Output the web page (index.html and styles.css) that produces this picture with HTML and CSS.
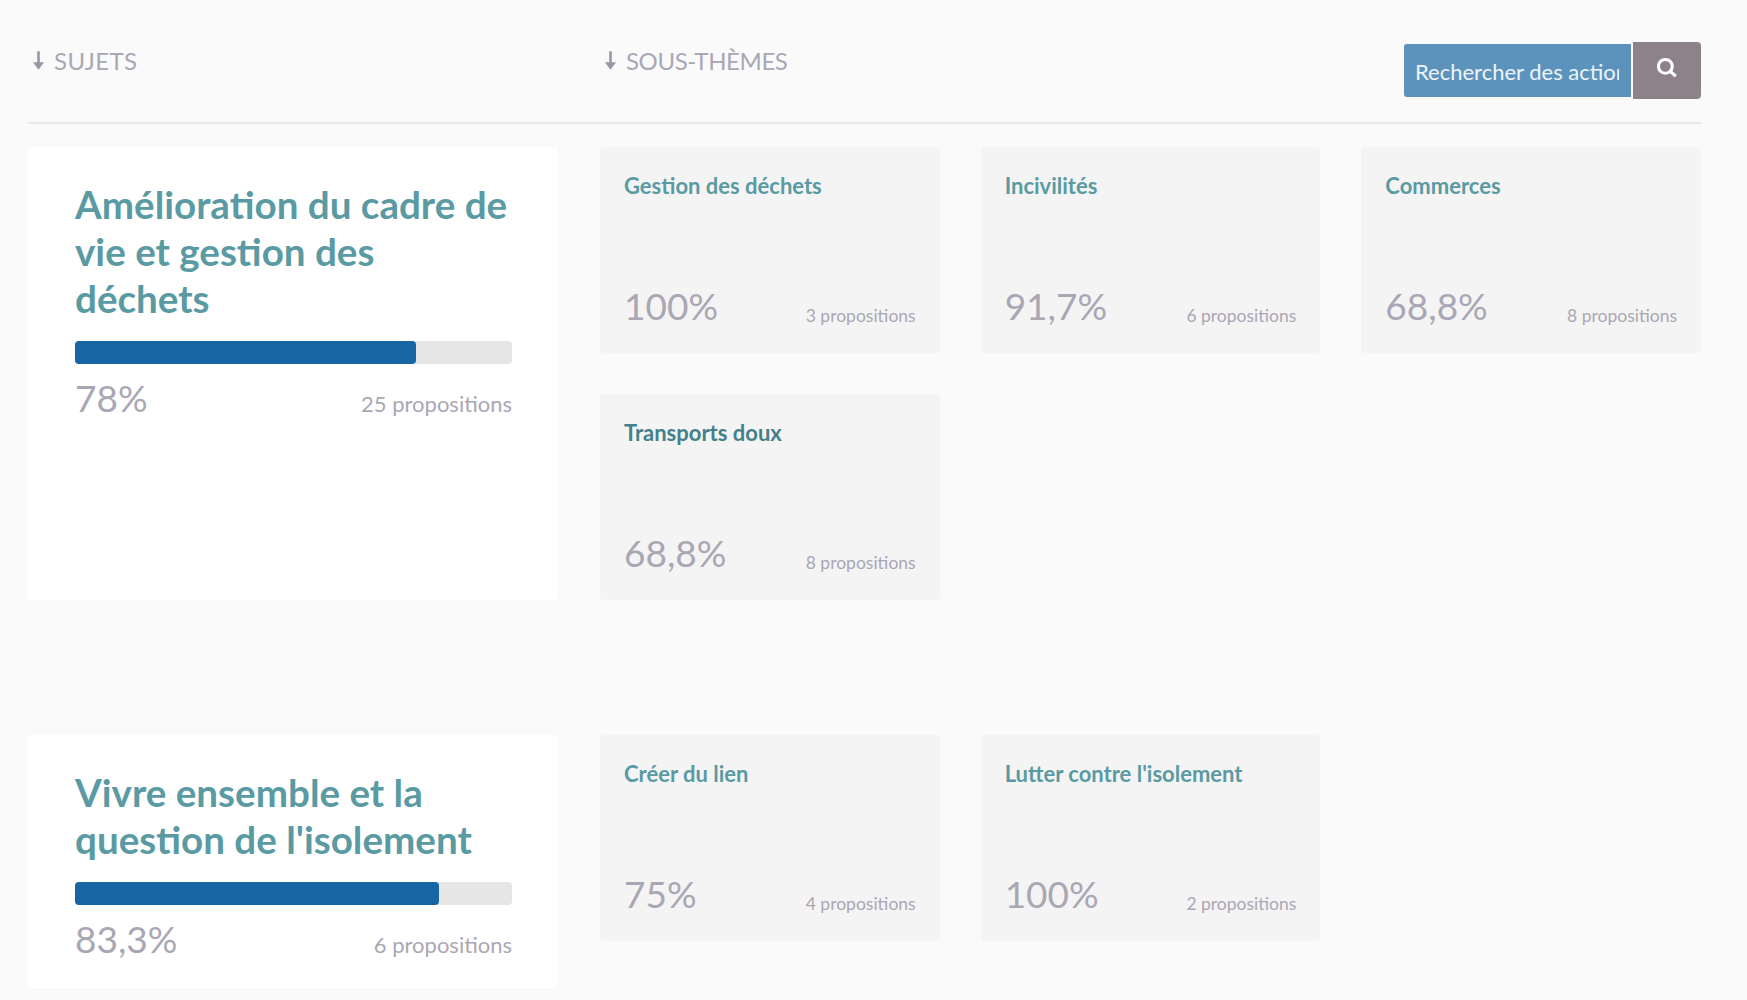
FILE: index.html
```html
<!DOCTYPE html>
<html lang="fr">
<head>
  <meta charset="UTF-8">
  <meta name="viewport" content="width=device-width, initial-scale=1.0">
  <title>Sujets et sous-thèmes</title>
  <link rel="stylesheet" href="styles.css">
</head>
<body>
  <header class="top-bar">
    <div class="col-label col-label-main">
      <svg class="arrow" viewBox="0 0 14 20"><path d="M5.6 0h2.8v12H13L7 20 1 12h4.6z" /></svg>
      SUJETS
    </div>
    <div class="col-label col-label-sub">
      <svg class="arrow" viewBox="0 0 14 20"><path d="M5.6 0h2.8v12H13L7 20 1 12h4.6z" /></svg>
      SOUS-THÈMES
    </div>
    <form class="search">
      <input class="search-input" type="text" placeholder="Rechercher des actions">
      <button class="search-button" type="button" aria-label="Rechercher">
        <svg viewBox="0 0 20 20" width="22" height="22"><circle cx="8.5" cy="8.5" r="6.3" /><path d="M13 13l5 4.5" /></svg>
      </button>
    </form>
  </header>

  <section class="topic">
    <div class="topic-card">
      <h2>Amélioration du cadre de vie et gestion des déchets</h2>
      <div class="bar"><div class="bar-fill" style="width: 78%"></div></div>
      <div class="stats">
        <span class="percent">78%</span>
        <span class="count">25 propositions</span>
      </div>
    </div>
    <div class="subtopics">
      <div class="sub-card">
        <h3>Gestion des déchets</h3>
        <div class="sub-stats"><span class="percent">100%</span><span class="count-small">3 propositions</span></div>
      </div>
      <div class="sub-card">
        <h3>Incivilités</h3>
        <div class="sub-stats"><span class="percent">91,7%</span><span class="count-small">6 propositions</span></div>
      </div>
      <div class="sub-card">
        <h3>Commerces</h3>
        <div class="sub-stats"><span class="percent">68,8%</span><span class="count-small">8 propositions</span></div>
      </div>
      <div class="sub-card">
        <h3 class="active">Transports doux</h3>
        <div class="sub-stats"><span class="percent">68,8%</span><span class="count-small">8 propositions</span></div>
      </div>
    </div>
  </section>

  <section class="topic">
    <div class="topic-card">
      <h2>Vivre ensemble et la question de l'isolement</h2>
      <div class="bar"><div class="bar-fill" style="width: 83.3%"></div></div>
      <div class="stats">
        <span class="percent">83,3%</span>
        <span class="count">6 propositions</span>
      </div>
    </div>
    <div class="subtopics">
      <div class="sub-card">
        <h3>Créer du lien</h3>
        <div class="sub-stats"><span class="percent">75%</span><span class="count-small">4 propositions</span></div>
      </div>
      <div class="sub-card">
        <h3>Lutter contre l'isolement</h3>
        <div class="sub-stats"><span class="percent">100%</span><span class="count-small">2 propositions</span></div>
      </div>
    </div>
  </section>
</body>
</html>
```

FILE: styles.css
```css
html, body {
  height: 100%;
  overflow: hidden;
}

body {
  margin: 0;
  padding: 0 46px 0 28px;
  background-color: #fafafa;
  color: #aaa7b5;
  font-family: Lato, "Open Sans", sans-serif;
}

.top-bar {
  display: grid;
  grid-template-columns: 572px 1fr auto;
  height: 122px;
  border-bottom: 2px solid #e9e9e9;
  margin-bottom: 23px;
}

.col-label {
  display: flex;
  align-items: center;
  gap: 9px;
  height: 24px;
  margin-top: 48px;
  font-size: 24px;
  color: #aaa7b5;
}

.col-label-main {
  padding-left: 1px;
  letter-spacing: 0.4px;
}

.col-label-sub {
  padding-left: 1px;
  letter-spacing: -0.4px;
}

.arrow {
  width: 13px;
  height: 19px;
  margin-left: 3px;
  fill: #9a97a5;
}

.search {
  display: flex;
  align-items: center;
  gap: 2px;
  height: 57px;
  margin-top: 42px;
}

.search-input {
  width: 227px;
  height: 53px;
  box-sizing: border-box;
  padding: 1px 12px 0 11px;
  border: none;
  border-radius: 3px 0 0 3px;
  background-color: #5c93bd;
  color: #fff;
  font-family: inherit;
  font-size: 22px;
}

.search-input::placeholder {
  color: #eef4f8;
  opacity: 1;
}

.search-button {
  display: flex;
  align-items: center;
  justify-content: center;
  width: 68px;
  height: 57px;
  padding: 0 0 5px;
  border: none;
  border-radius: 0 4px 4px 0;
  background-color: #8d8289;
}

.search-button svg {
  fill: none;
  stroke: #fff;
  stroke-width: 2.8;
}

.topic {
  display: grid;
  grid-template-columns: 530px 1fr;
  gap: 42px;
  margin-bottom: 135px;
}

.topic-card {
  box-sizing: border-box;
  padding: 34px 46px 26px 47px;
  border-radius: 3px;
  background-color: #fff;
}

.topic-card h2 {
  margin: 0 0 19px;
  font-size: 38.6px;
  font-weight: 700;
  line-height: 47px;
  color: #5a9aa3;
}

.bar {
  height: 23px;
  border-radius: 4px;
  background-color: #e6e6e6;
}

.bar-fill {
  height: 100%;
  border-radius: 4px;
  background-color: #1766a3;
}

.stats {
  display: flex;
  justify-content: space-between;
  align-items: baseline;
  margin-top: 11px;
}

.percent {
  font-size: 37px;
  line-height: 46px;
  color: #aaa7b5;
}

.count {
  font-size: 22px;
  color: #aaa7b5;
}

.subtopics {
  display: grid;
  grid-template-columns: repeat(3, 1fr);
  grid-auto-rows: 206px;
  gap: 41px;
}

.sub-card {
  display: flex;
  flex-direction: column;
  justify-content: space-between;
  box-sizing: border-box;
  padding: 25px 24px 24px;
  border-radius: 4px;
  background-color: #f4f4f4;
}

.sub-card h3 {
  margin: 0;
  font-size: 22px;
  font-weight: 700;
  line-height: 28px;
  color: #5a9aa3;
}

.sub-card h3.active {
  color: #44808a;
}

.sub-stats {
  display: flex;
  justify-content: space-between;
  align-items: baseline;
}

.count-small {
  position: relative;
  top: 2px;
  font-size: 17.5px;
  color: #aaa7b5;
}
```
